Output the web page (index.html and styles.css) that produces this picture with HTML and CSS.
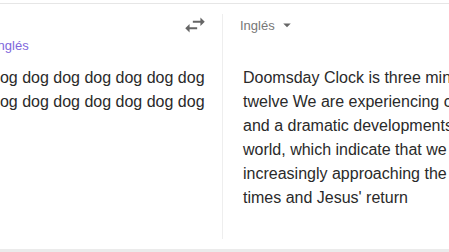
FILE: index.html
```html
<!DOCTYPE html>
<html lang="es">
<head>
    <meta charset="UTF-8">
    <meta name="viewport" content="width=device-width, initial-scale=1.0">
    <title>Traductor</title>
    <link rel="stylesheet" href="styles.css">
</head>
<body>

    <div class="top-line"></div>

    <div class="panels">
        <div class="source">
            <div class="swap-row">
                <svg class="swap-icon" viewBox="0 0 24 24" width="26" height="26">
                    <path d="M6.99 11L3 15l3.99 4v-3H14v-2H6.99v-3zM21 9l-4-4v3H10v2h7v3l4-4z"></path>
                </svg>
            </div>
            <div class="detected">Inglés</div>
            <div class="source-text">dog dog dog dog dog dog dog dog dog dog dog dog dog dog</div>
        </div>

        <div class="target">
            <div class="lang-select">
                <span>Inglés</span>
                <svg class="drop-icon" viewBox="0 0 24 24" width="18" height="18">
                    <path d="M7 10l5 5 5-5z"></path>
                </svg>
            </div>
            <div class="target-text">Doomsday Clock is three minutes to twelve We are experiencing climatic and a dramatic developments in the world, which indicate that we are increasingly approaching the end times and Jesus' return</div>
        </div>
    </div>

    <div class="bottom-bar"></div>

</body>
</html>
```

FILE: styles.css
```css
body {
    margin: 0;
    height: 252px;
    overflow: hidden;
    background-color: #fff;
    font-family: "Liberation Sans", Arial, sans-serif;
    color: #2a2a2a;
    display: flex;
    flex-direction: column;
}
.top-line {
    margin-top: 3px;
    height: 1px;
    background-color: #e6e6e6;
}
.panels {
    flex: 1;
    display: flex;
    margin-left: -25px;
}
.source {
    flex-shrink: 0;
    width: 248px;
    margin-top: 10px;
    margin-bottom: 10px;
    padding-left: 16px;
    box-sizing: border-box;
    border-right: 1px solid #eee;
}
.swap-row {
    display: flex;
    justify-content: flex-end;
    padding-right: 14px;
    margin-top: -2px;
}
.swap-icon {
    fill: #666;
}
.detected {
    margin-top: 0;
    margin-left: 3px;
    font-size: 13px;
    color: #8067dc;
}
.source-text {
    margin-top: 13px;
    width: 216px;
    font-size: 16px;
    line-height: 24px;
}
.target {
    flex-shrink: 0;
    width: 320px;
    padding-left: 17px;
    padding-top: 12px;
}
.lang-select {
    display: flex;
    align-items: center;
    gap: 3px;
    font-size: 13px;
    color: #777;
}
.drop-icon {
    fill: #666;
}
.target-text {
    margin-top: 32px;
    margin-left: 3px;
    width: 270px;
    font-size: 16px;
    line-height: 24px;
}
.bottom-bar {
    height: 3px;
    background-color: #ebebeb;
}
```
